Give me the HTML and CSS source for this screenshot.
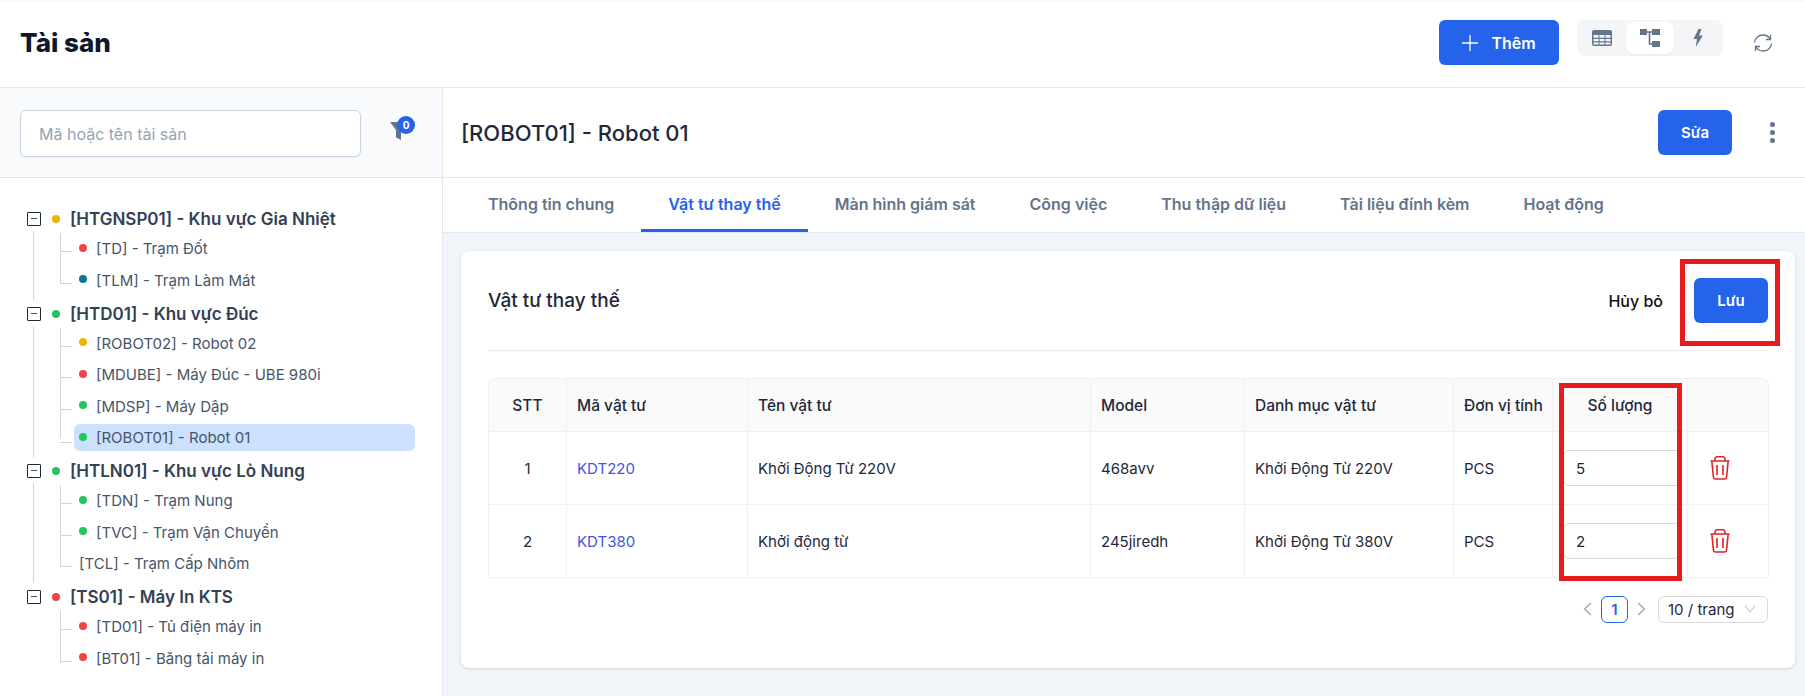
FILE: index.html
```html
<!DOCTYPE html>
<html lang="vi">
<head>
<meta charset="utf-8">
<title>Tài sản</title>
<link rel="stylesheet" href="styles.css">
</head>
<body>
<div class="app">
  <header class="topbar">
    <h1 class="page-title">Tài sản</h1>
    <div class="top-actions">
      <button class="btn btn-add">
        <svg class="plus" viewBox="0 0 16 16" width="16" height="16"><path d="M8 0v16M0 8h16" stroke="#fff" stroke-width="1.3" fill="none"/></svg>
        <span>Thêm</span>
      </button>
      <div class="switcher">
        <span class="sw-item">
          <svg viewBox="0 0 20 16" width="20" height="16"><path fill="#64748b" d="M2 0h16a2 2 0 0 1 2 2v12a2 2 0 0 1-2 2H2a2 2 0 0 1-2-2V2a2 2 0 0 1 2-2z"/><path fill="#f4f5f6" d="M1.500 5h5v2.700h-5zM7.500 5h5v2.700h-5zM13.500 5h5v2.700h-5zM1.500 9h5v2.200h-5zM7.500 9h5v2.200h-5zM13.500 9h5v2.200h-5zM1.500 12.400h5v2.100h-5zM7.500 12.400h5v2.100h-5zM13.500 12.400h5v2.100h-5z"/></svg>
        </span>
        <span class="sw-item sw-active">
          <svg viewBox="0 0 20 18" width="20" height="18"><path fill="#64748b" d="M0 0h7v6H0zM12 0h8v6h-8zM12 12h8v6h-8z"/><path d="M7 3h5M9.500 3v12h3" stroke="#64748b" stroke-width="1.600" fill="none"/></svg>
        </span>
        <span class="sw-item">
          <svg viewBox="0 0 10 18" width="10" height="18"><path fill="#64748b" d="M5.500 0 .5 10H4L2.800 18 9.800 6.500H6L8.500 0z"/></svg>
        </span>
      </div>
      <svg class="refresh" viewBox="0 0 20 18" width="20" height="18" fill="none" stroke="#64748b" stroke-width="1.300"><path d="M1.500 8.500C2 4 5.500 1 10 1c3 0 5.500 1.500 7 4"/><path d="M18.500 9.500C18 14 14.500 17 10 17c-3 0-5.500-1.500-7-4"/><path d="M17.500 1v4.500H13M2.500 17v-4.500H7"/></svg>
    </div>
  </header>
  <div class="body">
    <aside class="sidebar">
      <div class="search-bar">
        <input class="search-input" placeholder="Mã hoặc tên tài sản">
        <span class="filter">
          <svg viewBox="0 0 16 18" width="16" height="18"><path fill="#64748b" d="M0 0h16L11 8v10L6 15.500V8z"/></svg>
          <span class="filter-badge">0</span>
        </span>
      </div>
      <div class="tree">
        <section class="group has-next">
          <div class="group-row"><span class="expander"></span><span class="dot amber"></span><span>[HTGNSP01] - Khu vực Gia Nhiệt</span></div>
          <ul class="children">
            <li class="child"><span class="dot red"></span>[TD] - Trạm Đốt</li>
            <li class="child"><span class="dot teal"></span>[TLM] - Trạm Làm Mát</li>
          </ul>
        </section>
        <section class="group has-next">
          <div class="group-row"><span class="expander"></span><span class="dot green"></span><span>[HTD01] - Khu vực Đúc</span></div>
          <ul class="children">
            <li class="child"><span class="dot amber"></span>[ROBOT02] - Robot 02</li>
            <li class="child"><span class="dot red"></span>[MDUBE] - Máy Đúc - UBE 980i</li>
            <li class="child"><span class="dot green"></span>[MDSP] - Máy Dập</li>
            <li class="child selected"><span class="dot green"></span>[ROBOT01] - Robot 01</li>
          </ul>
        </section>
        <section class="group has-next">
          <div class="group-row"><span class="expander"></span><span class="dot green"></span><span>[HTLN01] - Khu vực Lò Nung</span></div>
          <ul class="children">
            <li class="child"><span class="dot green"></span>[TDN] - Trạm Nung</li>
            <li class="child"><span class="dot green"></span>[TVC] - Trạm Vận Chuyển</li>
            <li class="child no-dot">[TCL] - Trạm Cấp Nhôm</li>
          </ul>
        </section>
        <section class="group">
          <div class="group-row"><span class="expander"></span><span class="dot red"></span><span>[TS01] - Máy In KTS</span></div>
          <ul class="children">
            <li class="child"><span class="dot red"></span>[TD01] - Tủ điện máy in</li>
            <li class="child"><span class="dot red"></span>[BT01] - Băng tải máy in</li>
          </ul>
        </section>
      </div>
    </aside>
    <main class="main">
      <div class="detail-head">
        <h2 class="detail-title">[ROBOT01] - Robot 01</h2>
        <button class="btn btn-edit">Sửa</button>
        <span class="kebab"><i></i><i></i><i></i></span>
      </div>
      <nav class="tabs">
        <a class="tab">Thông tin chung</a>
        <a class="tab tab-active">Vật tư thay thế</a>
        <a class="tab">Màn hình giám sát</a>
        <a class="tab">Công việc</a>
        <a class="tab">Thu thập dữ liệu</a>
        <a class="tab">Tài liệu đính kèm</a>
        <a class="tab">Hoạt động</a>
      </nav>
      <div class="content">
        <div class="card">
          <div class="card-head">
            <h3 class="card-title">Vật tư thay thế</h3>
            <span class="cancel">Hủy bỏ</span>
            <button class="btn btn-save">Lưu</button>
            <span class="mark mark-save"></span>
          </div>
          <div class="table-wrap">
            <span class="mark mark-qty"></span>
            <table class="grid">
              <colgroup>
                <col class="c-stt"><col class="c-code"><col class="c-name"><col class="c-model"><col class="c-cat"><col class="c-unit"><col class="c-qty"><col class="c-act">
              </colgroup>
              <thead>
                <tr><th class="center">STT</th><th>Mã vật tư</th><th>Tên vật tư</th><th>Model</th><th>Danh mục vật tư</th><th>Đơn vị tính</th><th class="center">Số lượng</th><th></th></tr>
              </thead>
              <tbody>
                <tr>
                  <td class="center">1</td><td><a class="link">KDT220</a></td><td>Khởi Động Từ 220V</td><td>468avv</td><td>Khởi Động Từ 220V</td><td>PCS</td>
                  <td class="qty-cell"><input class="qty" value="5"></td>
                  <td class="act-cell"><svg class="trash" viewBox="0 0 20 24" width="20" height="24" fill="none" stroke="#e02424" stroke-width="1.600"><path d="M.5 5h19M1.800 5l1.700 16.300a2 2 0 0 0 2 1.700h9a2 2 0 0 0 2-1.700L18.200 5M5 5V3a2.200 2.200 0 0 1 2.200-2.200h5.600A2.200 2.200 0 0 1 15 3v2M7 9v10M13 9v10"/></svg></td>
                </tr>
                <tr>
                  <td class="center">2</td><td><a class="link">KDT380</a></td><td>Khởi động từ</td><td>245jiredh</td><td>Khởi Động Từ 380V</td><td>PCS</td>
                  <td class="qty-cell"><input class="qty" value="2"></td>
                  <td class="act-cell"><svg class="trash" viewBox="0 0 20 24" width="20" height="24" fill="none" stroke="#e02424" stroke-width="1.600"><path d="M.5 5h19M1.800 5l1.700 16.300a2 2 0 0 0 2 1.700h9a2 2 0 0 0 2-1.700L18.200 5M5 5V3a2.200 2.200 0 0 1 2.200-2.200h5.600A2.200 2.200 0 0 1 15 3v2M7 9v10M13 9v10"/></svg></td>
                </tr>
              </tbody>
            </table>
          </div>
          <div class="pager">
            <svg viewBox="0 0 9 14" width="9" height="14" fill="none" stroke="#94a3b8" stroke-width="1.200"><path d="M8 1 1.500 7 8 13"/></svg>
            <span class="page-current">1</span>
            <svg viewBox="0 0 9 14" width="9" height="14" fill="none" stroke="#94a3b8" stroke-width="1.200"><path d="M1 1l6.500 6L1 13"/></svg>
            <span class="page-size">10 / trang
              <svg viewBox="0 0 12 8" width="12" height="8" fill="none" stroke="#cbd5e1" stroke-width="1.200"><path d="M1 1l5 6 5-6"/></svg>
            </span>
          </div>
        </div>
      </div>
    </main>
  </div>
</div>
</body>
</html>
```
FILE: styles.css
```css
* { box-sizing: border-box; }
html, body { margin: 0; padding: 0; height: 100%; }
body {
  font-family: Inter, "Noto Sans", sans-serif;
  color: #1e293b;
  background: #fff;
  overflow: hidden;
}
h1, h2, h3, ul { margin: 0; padding: 0; }
button { font-family: inherit; border: 0; cursor: pointer; }
.app { display: flex; flex-direction: column; width: 1805px; height: 696px; }

.topbar {
  height: 88px;
  display: flex;
  align-items: center;
  justify-content: space-between;
  padding: 0 32px 4px 20px;
  border-top: 2px solid #f8f9fa;
  border-bottom: 1px solid #e2e8f0;
}
.page-title { font-size: 26px; font-weight: 800; color: #0f172a; }
.top-actions { display: flex; align-items: center; height: 45px; }
.btn {
  background: #2563eb;
  color: #fff;
  font-size: 15px;
  font-weight: 600;
  border-radius: 6px;
  height: 45px;
  display: inline-flex;
  align-items: center;
  justify-content: center;
}
.btn-add { width: 120px; gap: 13px; font-size: 16px; }
.switcher {
  display: flex;
  align-items: center;
  align-self: flex-start;
  margin-left: 18px;
  width: 146px;
  height: 36px;
  padding: 2px 0 2px 1px;
  background: #f4f5f6;
  border-radius: 8px;
}
.sw-item { width: 48px; height: 32px; display: flex; align-items: center; justify-content: center; }
.sw-active { background: #fff; border-radius: 8px; box-shadow: 0 1px 2px rgba(15, 23, 42, .06); }
.refresh { margin-left: 30px; align-self: flex-start; margin-top: 14px; }

.body { flex: 1; display: flex; min-height: 0; }
.sidebar { width: 443px; border-right: 1px solid #e2e8f0; flex: none; }
.search-bar {
  height: 90px;
  background: #f8fafc;
  border-bottom: 1px solid #e2e8f0;
  display: flex;
  align-items: center;
  padding: 2px 0 0 20px;
}
.search-input {
  width: 341px;
  height: 47px;
  border: 1px solid #cbd5e1;
  border-radius: 6px;
  padding: 0 18px;
  font: 16px Inter, sans-serif;
  background: #fff;
  box-shadow: 0 1px 2px rgba(15, 23, 42, .05);
}
.search-input::placeholder { color: #94a3b8; opacity: 1; }
.filter { position: relative; margin-left: 29px; width: 16px; height: 18px; display: block; top: -3px; }
.filter-badge {
  position: absolute;
  left: 7px;
  top: -6px;
  width: 18px;
  height: 18px;
  border-radius: 50%;
  background: #2563eb;
  color: #fff;
  font-size: 10px;
  font-weight: 700;
  line-height: 18px;
  text-align: center;
}

.tree { padding-top: 27px; }
.group { position: relative; padding-bottom: 3.500px; }
.group-row {
  position: relative;
  height: 28px;
  display: flex;
  align-items: center;
  padding-left: 27px;
  font-size: 17px;
  font-weight: 600;
  color: #334155;
}
.expander {
  width: 14px;
  height: 14px;
  border: 1px solid #1e293b;
  border-radius: 1px;
  position: relative;
  margin-right: 11px;
  flex: none;
}
.expander::after {
  content: "";
  position: absolute;
  left: 3px;
  top: 5px;
  width: 6px;
  height: 1px;
  background: #475569;
}
.dot { width: 8px; height: 8px; border-radius: 50%; display: inline-block; flex: none; margin-right: 10px; }
.amber { background: #eab308; }
.red { background: #ef4444; }
.green { background: #22c55e; }
.teal { background: #0e7490; }
.has-next::before {
  content: "";
  position: absolute;
  left: 33px;
  top: 26px;
  bottom: 0;
  width: 1px;
  background: #d4d4d8;
}
.children { list-style: none; position: relative; }
.children::before {
  content: "";
  position: absolute;
  left: 60px;
  top: 0;
  bottom: 13px;
  width: 1px;
  background: #d4d4d8;
}
.child {
  position: relative;
  height: 31.500px;
  margin-left: 74px;
  margin-right: 27px;
  display: flex;
  align-items: center;
  padding-left: 5px;
  font-size: 15px;
  color: #475569;
}
.child::before {
  content: "";
  position: absolute;
  left: -14px;
  top: 18px;
  width: 12px;
  height: 1px;
  background: #d4d4d8;
}
.child .dot { margin-right: 9px; position: relative; top: -1px; }
.selected { background: #cce0ff; border-radius: 6px; height: 27px; margin-top: 2px; margin-bottom: 2.500px; }

.main { flex: 1; min-width: 0; display: flex; flex-direction: column; background: #f1f5f9; }
.detail-head {
  height: 90px;
  background: #fff;
  border-bottom: 1px solid #e2e8f0;
  display: flex;
  align-items: center;
  padding: 0 30px 0 18px;
}
.detail-title { font-size: 22px; font-weight: 500; flex: 1; color: #1e293b; }
.btn-edit { width: 74px; }
.kebab { display: flex; flex-direction: column; gap: 3px; margin-left: 38px; }
.kebab i { width: 5px; height: 5px; border-radius: 50%; background: #64748b; display: block; }

.tabs {
  height: 55px;
  background: #fff;
  border-bottom: 1px solid #e2e8f0;
  display: flex;
  padding-left: 18px;
}
.tab {
  padding: 0 27px;
  height: 54px;
  display: flex;
  align-items: center;
  font-size: 16px;
  font-weight: 600;
  color: #64748b;
  border-bottom: 3px solid transparent;
}
.tab-active { color: #2563eb; border-bottom-color: #2563eb; }

.content { padding: 18px 10px 0 18px; }
.card {
  height: 417px;
  background: #fff;
  border-radius: 8px;
  box-shadow: 0 1px 3px rgba(15, 23, 42, .15);
  padding: 0 27px;
}
.card-head {
  position: relative;
  height: 100px;
  border-bottom: 1px solid #e9eaee;
  display: flex;
  align-items: center;
}
.card-title { font-size: 19px; font-weight: 500; flex: 1; }
.cancel { font-size: 16px; font-weight: 500; color: #111; margin-right: 31px; }
.btn-save { width: 74px; }
.mark { position: absolute; border: 5px solid #e81c1c; z-index: 2; pointer-events: none; }
.mark-save { right: -12px; top: 8px; width: 100px; height: 87px; }
.mark-qty { left: 1071px; top: 5px; width: 123px; height: 198px; }

.table-wrap { position: relative; margin-top: 27px; }
.grid {
  width: 100%;
  table-layout: fixed;
  border-collapse: separate;
  border-spacing: 0;
  font-size: 15px;
  border: 1px solid #eef0f2;
  border-width: 1px 0 0 1px;
  border-radius: 8px 8px 0 0;
}
.c-stt { width: 78px; }
.c-code { width: 181px; }
.c-name { width: 343px; }
.c-model { width: 154px; }
.c-cat { width: 209px; }
.c-unit { width: 99px; }
.c-qty { width: 135px; }
.c-act { width: 81px; }
.grid th, .grid td {
  border-right: 1px solid #eef0f2;
  border-bottom: 1px solid #eef0f2;
  padding: 0 10px;
  text-align: left;
  color: #1e293b;
  white-space: nowrap;
}
.grid th { height: 53px; background: #fafafa; font-weight: 500; font-size: 15.500px; }
.grid th:first-child { border-top-left-radius: 8px; }
.grid th:last-child { border-top-right-radius: 8px; }
.grid td { height: 73px; }
.grid .center { text-align: center; }
.grid .act-cell { padding: 0 16px 0 0; }
.link { color: #3f56dc; }
.qty {
  width: 118px;
  height: 36px;
  border: 1px solid #d9d9d9;
  border-radius: 6px;
  padding: 0 12px;
  font: 15px Inter, sans-serif;
  color: #1e293b;
  display: block;
}
.trash { display: block; margin: 0 auto; }

.pager { display: flex; align-items: center; justify-content: flex-end; margin-top: 18px; height: 26px; }
.page-current {
  width: 27px;
  height: 27px;
  border: 1px solid #2563eb;
  border-radius: 6px;
  color: #2563eb;
  font-size: 15px;
  font-weight: 600;
  display: flex;
  align-items: center;
  justify-content: center;
  margin: 0 9px;
}
.page-size {
  width: 110px;
  height: 27px;
  margin-left: 12px;
  border: 1px solid #d9d9d9;
  border-radius: 6px;
  padding: 0 11px 0 9px;
  font-size: 15px;
  display: flex;
  align-items: center;
  justify-content: space-between;
}
```
